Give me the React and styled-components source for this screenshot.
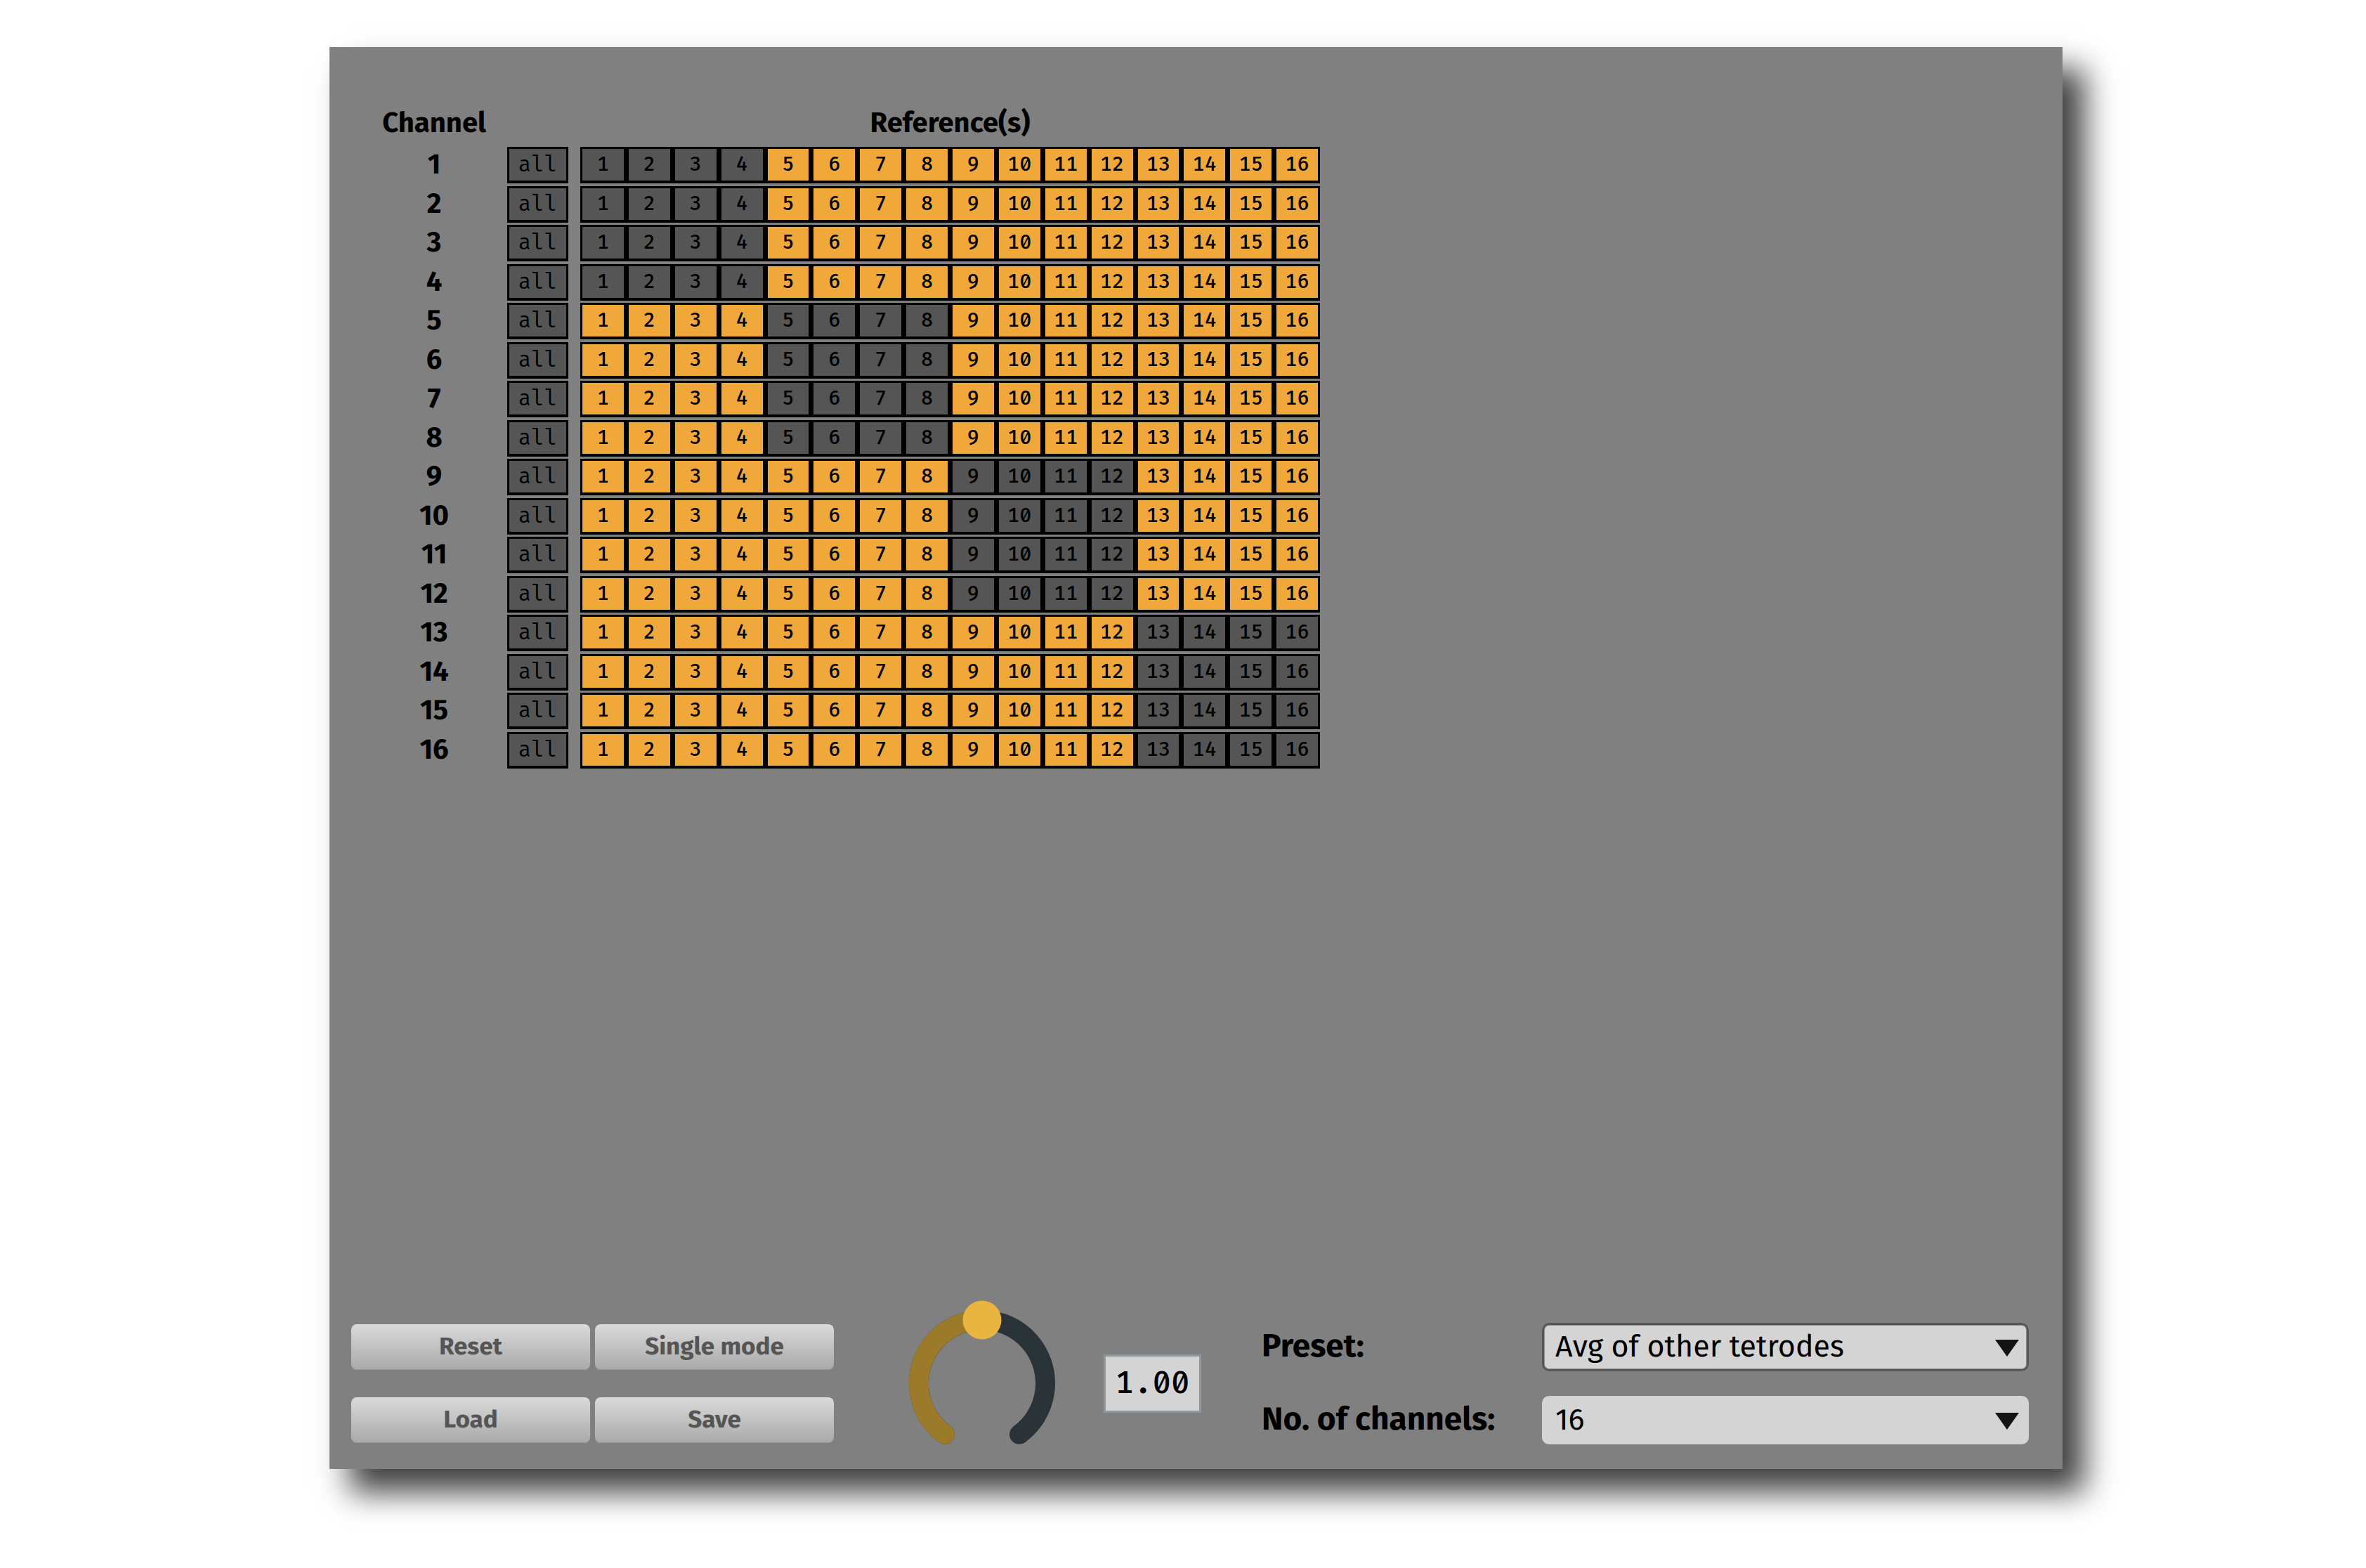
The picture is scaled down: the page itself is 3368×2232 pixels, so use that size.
import React, { useState } from 'react';
import styled, { createGlobalStyle } from 'styled-components';

const SANS = '"Fira Sans", Roboto, "Noto Sans", sans-serif';
const MONO = '"Fira Code", "Fira Mono", "DejaVu Sans Mono", monospace';

const COUNT = 16;
const GROUP = 4;
const channels = Array.from({ length: COUNT }, (_, i) => i + 1);
const groupOf = (n) => Math.floor((n - 1) / GROUP);
const tetrodeDefaults = () =>
  channels.map((c) => channels.map((r) => groupOf(c) !== groupOf(r)));

const GlobalStyle = createGlobalStyle`
  *, *::before, *::after { box-sizing: border-box; }
  body { margin: 0; background: #fff; color: #000; font-family: ${SANS}; }
  button, input, select { margin: 0; color: inherit; font-family: inherit; }
`;

const Page = styled.div`
  display: flex;
  min-height: 100vh;
  padding: 67px 432px 141px 469px;
`;

const Panel = styled.main`
  flex: 1;
  display: flex;
  flex-direction: column;
  justify-content: space-between;
  gap: 40px;
  padding: 84px 48px 35px 31px;
  background: #808080;
  box-shadow: 30px 32px 42px 1px rgba(0, 0, 0, 0.75);
`;

const Matrix = styled.section`
  display: flex;
  flex-direction: column;
  gap: 10px;
  margin-left: 31px;
`;

const MatrixRow = styled.div`
  display: grid;
  grid-template-columns: 174px 87px minmax(0, 1053px);
  column-gap: 17px;
  align-items: start;
`;

const ColumnTitle = styled.h2`
  grid-column: ${(p) => p.$column};
  margin: 0;
  font-size: 40px;
  font-weight: 700;
  line-height: 48px;
  text-align: center;
`;

const Rows = styled.div`
  display: grid;
  grid-template-rows: repeat(16, 1fr);
  height: 888px;
`;

const ChannelName = styled.span`
  font-size: 40px;
  font-weight: 700;
  line-height: 50px;
  text-align: center;
`;

const ToggleStrip = styled.div`
  display: grid;
  grid-template-columns: repeat(${(p) => p.$columns}, minmax(0, 1fr));
  gap: 7px;
  height: 52px;
  padding: 3px 3px 4px;
  background: #000;
`;

const Toggle = styled.button`
  padding: 0;
  border: 0;
  background: ${(p) => (p.$on ? '#f1a83a' : '#555')};
  color: #000;
  font-family: ${MONO};
  font-size: ${(p) => (p.$wide ? '30px' : '28px')};
  font-weight: ${(p) => (p.$wide ? 400 : 500)};
  line-height: 45px;
  text-align: center;
  cursor: pointer;
`;

const ControlBar = styled.footer`
  display: flex;
  align-items: center;
`;

const Actions = styled.div`
  display: grid;
  grid-template-columns: repeat(2, 340px);
  gap: 39px 7px;
`;

const ActionButton = styled.button`
  height: 65px;
  padding: 0 0 3px;
  border: 0;
  border-radius: 8px;
  background: linear-gradient(#dadada, #a9a9a9);
  box-shadow: inset 0 -1px #999;
  color: #555;
  font-size: 35px;
  font-weight: 700;
  line-height: 42px;
  cursor: pointer;
`;

const Knob = styled.label`
  position: relative;
  display: block;
  flex: none;
  width: 208px;
  height: 173px;
  margin-left: 107px;
`;

const KnobInput = styled.input`
  position: absolute;
  inset: 0;
  width: 100%;
  height: 100%;
  opacity: 0;
  cursor: pointer;
`;

const KnobDrawing = styled.svg`
  display: block;
  overflow: visible;
`;

const GainValue = styled.input`
  flex: none;
  width: 139px;
  height: 83px;
  margin-left: 69px;
  padding: 0;
  border: 3px solid #8e989d;
  border-radius: 0;
  background: #d4d4d4;
  text-align: center;
  font-size: 43px;
  font-weight: 500;

  && { font-family: ${MONO}; }
`;

const Settings = styled.div`
  flex: 1;
  display: grid;
  grid-template-columns: 399px minmax(0, 1fr);
  row-gap: 35px;
  align-items: start;
  margin-left: 86px;
`;

const SettingLabel = styled.label`
  font-size: 46px;
  font-weight: 700;
  line-height: 66px;
  white-space: nowrap;
`;

const SelectBox = styled.div`
  position: relative;
`;

const Select = styled.select`
  display: block;
  width: 100%;
  height: 69px;
  padding: 0 60px 2px 19px;
  border: 0;
  border-radius: 10px;
  appearance: none;
  outline: none;
  background: #d4d4d4;
  box-shadow: ${(p) =>
    p.$outlined ? 'inset 0 0 0 3px #575757, inset 0 0 0 4px #8c8c8c' : 'none'};
  font-size: 43px;
  font-weight: 400;
`;

const Arrow = styled.svg`
  position: absolute;
  top: 24px;
  right: 14px;
  pointer-events: none;
`;

function ArrowDown() {
  return (
    <Arrow width="34" height="24" viewBox="0 0 34 24" aria-hidden="true">
      <path d="M0 0H34L17 24Z" fill="#141414" />
    </Arrow>
  );
}

function GainKnob({ value, onChange }) {
  // The dial sweeps 288 degrees, from -144 to 144, measured from the top.
  const point = (deg) => {
    const a = (deg * Math.PI) / 180;
    return [104 + 90 * Math.sin(a), 117 - 90 * Math.cos(a)];
  };
  const current = -144 + (value / 2) * 288;
  const arc = (from, to) => {
    const [x1, y1] = point(from);
    const [x2, y2] = point(to);
    return `M${x1} ${y1}A90 90 0 ${to - from > 180 ? 1 : 0} 1 ${x2} ${y2}`;
  };
  const [tx, ty] = point(current);
  return (
    <Knob>
      <KnobDrawing width="208" height="173" viewBox="0 31 208 173" aria-hidden="true">
        <g fill="none" strokeWidth="28" strokeLinecap="round">
          <path d={arc(-144, 144)} stroke="#2a3338" />
          <path d={arc(-144, current)} stroke="#9b7a29" />
        </g>
        <circle cx={tx} cy={ty} r="27.5" fill="#e9b540" />
      </KnobDrawing>
      <KnobInput
        type="range"
        min="0"
        max="2"
        step="0.01"
        aria-label="Gain"
        value={value}
        onChange={(e) => onChange(Number(e.target.value))}
      />
    </Knob>
  );
}

export default function App() {
  const [matrix, setMatrix] = useState(tetrodeDefaults);
  const [gain, setGain] = useState(1);

  const toggle = (row, col) =>
    setMatrix((m) =>
      m.map((cells, r) => (r === row ? cells.map((on, c) => (c === col ? !on : on)) : cells))
    );
  const selectAll = (row) =>
    setMatrix((m) =>
      m.map((cells, r) => (r === row ? cells.map(() => !cells.every(Boolean)) : cells))
    );

  return (
    <>
      <GlobalStyle />
      <Page>
        <Panel>
          <Matrix>
            <MatrixRow>
              <ColumnTitle $column={1}>Channel</ColumnTitle>
              <ColumnTitle $column={3}>Reference(s)</ColumnTitle>
            </MatrixRow>
            <Rows>
              {matrix.map((cells, row) => (
                <MatrixRow key={row}>
                  <ChannelName>{row + 1}</ChannelName>
                  <ToggleStrip $columns={1}>
                    <Toggle $wide aria-pressed={cells.every(Boolean)} onClick={() => selectAll(row)}>
                      all
                    </Toggle>
                  </ToggleStrip>
                  <ToggleStrip $columns={COUNT}>
                    {cells.map((on, col) => (
                      <Toggle key={col} $on={on} aria-pressed={on} onClick={() => toggle(row, col)}>
                        {col + 1}
                      </Toggle>
                    ))}
                  </ToggleStrip>
                </MatrixRow>
              ))}
            </Rows>
          </Matrix>

          <ControlBar>
            <Actions>
              <ActionButton onClick={() => setMatrix(tetrodeDefaults())}>Reset</ActionButton>
              <ActionButton>Single mode</ActionButton>
              <ActionButton>Load</ActionButton>
              <ActionButton>Save</ActionButton>
            </Actions>
            <GainKnob value={gain} onChange={setGain} />
            <GainValue aria-label="Gain value" value={gain.toFixed(2)} readOnly />
            <Settings>
              <SettingLabel htmlFor="preset">Preset:</SettingLabel>
              <SelectBox>
                <Select id="preset" $outlined defaultValue="tetrodes">
                  <option value="tetrodes">Avg of other tetrodes</option>
                </Select>
                <ArrowDown />
              </SelectBox>
              <SettingLabel htmlFor="channels">No. of channels:</SettingLabel>
              <SelectBox>
                <Select id="channels" defaultValue="16">
                  <option value="16">16</option>
                </Select>
                <ArrowDown />
              </SelectBox>
            </Settings>
          </ControlBar>
        </Panel>
      </Page>
    </>
  );
}
